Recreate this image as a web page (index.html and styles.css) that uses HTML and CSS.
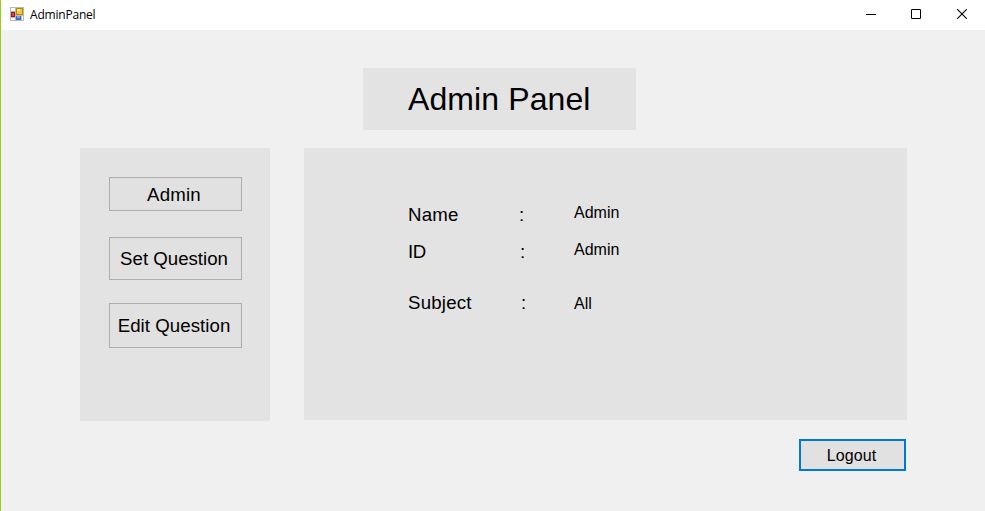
FILE: index.html
```html
<!DOCTYPE html>
<html lang="en">
<head>
<meta charset="utf-8">
<title>AdminPanel</title>
<link rel="stylesheet" href="styles.css">
</head>
<body>
<div class="window">
  <header class="titlebar">
    <svg class="app-icon" width="14" height="14" viewBox="0 0 14 14" shape-rendering="crispEdges">
      <rect width="14" height="14" fill="#b9b9b9"/>
      <rect x="1" y="1" width="4" height="3" fill="#fff"/>
      <rect x="1" y="11" width="4" height="2" fill="#fff"/>
      <rect x="12" y="9" width="1" height="4" fill="#fff"/>
      <rect x="6" y="1" width="7" height="7" fill="#b98a00"/>
      <rect x="7" y="2" width="5" height="5" fill="#f7c93a"/>
      <rect x="7" y="2" width="3" height="2" fill="#ffe58a"/>
      <rect x="1" y="5" width="4" height="5" fill="#a31515"/>
      <rect x="2" y="6" width="2" height="3" fill="#d84a3c"/>
      <rect x="6" y="9" width="5" height="4" fill="#3470cc"/>
      <rect x="7" y="9" width="3" height="2" fill="#78a9f0"/>
    </svg>
    <span class="caption">AdminPanel</span>
    <div class="controls">
      <svg width="11" height="10" viewBox="0 0 11 10"><path d="M1 5.5H11" stroke="#000"/></svg>
      <svg width="10" height="10" viewBox="0 0 10 10"><path d="M.5 .5H9.5V9.5H.5Z" fill="none" stroke="#000"/></svg>
      <svg class="close" width="10" height="10" viewBox="0 0 10 10"><path d="M.2 .2L9.8 9.8M9.8 .2L.2 9.8" stroke="#000" stroke-width="1.1"/></svg>
    </div>
  </header>
  <main class="client">
    <h1 class="heading">Admin Panel</h1>
    <div class="columns">
      <nav class="menu">
        <button class="btn btn-admin">Admin</button>
        <button class="btn btn-set">Set Question</button>
        <button class="btn btn-edit">Edit Question</button>
      </nav>
      <section class="details">
        <div class="row row-name"><span class="label">Name</span><span class="colon">:</span><span class="value">Admin</span></div>
        <div class="row row-id"><span class="label">ID</span><span class="colon">:</span><span class="value">Admin</span></div>
        <div class="row row-subject"><span class="label">Subject</span><span class="colon">:</span><span class="value">All</span></div>
      </section>
    </div>
    <button class="logout">Logout</button>
  </main>
</div>
</body>
</html>
```
FILE: styles.css
```css
* { box-sizing: border-box; }
body { margin: 0; font-family: "Liberation Sans", Arial, sans-serif; color: #000; }
.window { width: 985px; height: 511px; border-left: 1px solid #9acd14; background: #f0f0f0; overflow: hidden; }
.titlebar { display: flex; align-items: center; height: 30px; padding: 0 18px 0 9px; background: #fff; }
.app-icon { display: block; margin-top: -2px; }
.caption { margin-left: 6px; font: 12px/16px "Open Sans", sans-serif; letter-spacing: -0.2px; }
.controls { display: flex; gap: 35px; margin-left: auto; margin-top: -2px; }
.controls svg { display: block; }
.controls .close { margin-left: 1px; }
.client { display: flex; flex-direction: column; }
.heading { width: 273px; height: 62px; margin: 38px 0 0 362px; padding-left: 45px; background: #e3e3e3; font-size: 32px; font-weight: 400; line-height: 62px; letter-spacing: 0.1px; white-space: nowrap; }
.columns { display: flex; align-items: flex-start; gap: 34px; margin: 18px 0 0 79px; }
.menu { display: flex; flex-direction: column; width: 190px; height: 273px; padding: 29px 28px 0 29px; background: #e3e3e3; }
.btn { display: flex; align-items: center; justify-content: center; padding: 0 3px 0 0; border: 1px solid #adadad; background: #e1e1e1; font: 18.67px/20px "Liberation Sans", Arial, sans-serif; color: #000; white-space: nowrap; }
.btn-admin { height: 34px; padding-top: 2px; letter-spacing: 0.2px; }
.btn-set { height: 43px; margin-top: 26px; }
.btn-edit { height: 45px; margin-top: 23px; letter-spacing: 0.05px; }
.details { width: 603px; height: 272px; padding: 56px 0 0 104px; background: #e3e3e3; }
.row { display: grid; grid-template-columns: 111px 55px auto; height: 22px; font-size: 18.67px; line-height: 22px; }
.row-name .label, .row-subject .label { letter-spacing: 0.2px; }
.row-id .label { letter-spacing: -0.5px; }
.row-id { grid-template-columns: 112px 54px auto; margin-top: 15px; }
.row-subject { grid-template-columns: 113px 53px auto; margin-top: 29px; }
.value { font-size: 16px; line-height: 18px; }
.row-subject .value { line-height: 24px; }
.logout { align-self: flex-end; width: 107px; height: 32px; margin: 18px 79px 0 0; padding: 2px 2px 0 0; border: 2px solid #0078d7; background: #e1e1e1; font: 16px/20px "Liberation Sans", Arial, sans-serif; letter-spacing: 0.1px; color: #000; }
```
